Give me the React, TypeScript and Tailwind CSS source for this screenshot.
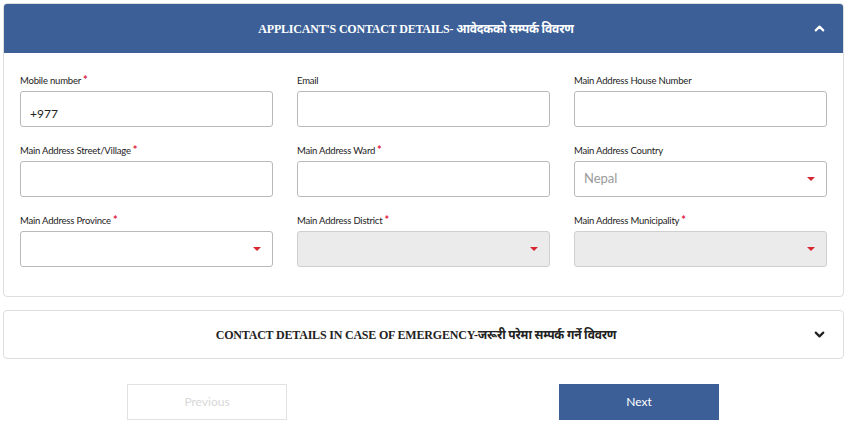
import { ChevronUp, ChevronDown } from 'lucide-react'

interface Field {
  label: string
  required?: boolean
  kind: 'input' | 'select'
  value?: string
  placeholder?: string
  disabled?: boolean
}

const fields: Field[] = [
  { label: 'Mobile number', required: true, kind: 'input', value: '+977' },
  { label: 'Email', kind: 'input' },
  { label: 'Main Address House Number', kind: 'input' },
  { label: 'Main Address Street/Village', required: true, kind: 'input' },
  { label: 'Main Address Ward', required: true, kind: 'input' },
  { label: 'Main Address Country', kind: 'select', placeholder: 'Nepal' },
  { label: 'Main Address Province', required: true, kind: 'select' },
  { label: 'Main Address District', required: true, kind: 'select', disabled: true },
  { label: 'Main Address Municipality', required: true, kind: 'select', disabled: true },
]

const headFont = "font-['Liberation_Serif','Noto_Sans',serif]"

function Caret() {
  return <span className="w-0 h-0 border-l-[4px] border-r-[4px] border-t-[4px] border-l-transparent border-r-transparent border-t-[#d7262f]" />
}

function FormField({ f }: { f: Field }) {
  return (
    <div className="flex flex-col">
      <label className="h-[14px] text-[9.5px] leading-[14px] tracking-[-0.2px] text-[#222] mb-[3px]">
        {f.label}
        {f.required && (
          <span className="text-[#e3173e] text-[11px] leading-none font-bold ml-[2px]">*</span>
        )}
      </label>
      <div
        className={
          'h-[36px] rounded-[3px] border border-[#b9b9b9] flex items-center pl-[9px] pr-[11px] ' +
          (f.disabled ? 'bg-[#ebebeb] border-[#cfcfcf]' : 'bg-white')
        }
      >
        <span
          className={
            'flex-1 ' + (f.value ? 'text-[#222] text-[12px] pt-[10px]' : 'text-[#9a9a9a] text-[13px]')
          }
        >
          {f.value ?? f.placeholder ?? ''}
        </span>
        {f.kind === 'select' && <Caret />}
      </div>
    </div>
  )
}

export default function App() {
  return (
    <div className="w-full min-h-[424px] bg-white px-[3px] pt-[3px] font-['Lato','Noto_Sans',sans-serif]">
      {/* Applicant's contact details */}
      <div className="border border-[#dedede] rounded-[4px] overflow-hidden">
        <div className="h-[49px] bg-[#3c5f97] flex items-center px-[16px]">
          <h2 className={`flex-1 text-center text-white text-[12px] tracking-[-0.2px] font-bold ${headFont}`}>
            APPLICANT'S CONTACT DETAILS- आवेदकको सम्पर्क विवरण
          </h2>
          <ChevronUp size={15} strokeWidth={3.5} className="text-white" />
        </div>
        <div className="grid grid-cols-3 gap-x-[24px] gap-y-[17px] pl-[16px] pr-[16px] pt-[21px] pb-[29px]">
          {fields.map((f) => (
            <FormField key={f.label} f={f} />
          ))}
        </div>
      </div>

      {/* Emergency contact */}
      <div className="mt-[13px] h-[49px] border border-[#dedede] rounded-[4px] flex items-center px-[16px]">
        <h2 className={`flex-1 text-center text-[#222] text-[12px] tracking-[-0.2px] font-bold ${headFont}`}>
          CONTACT DETAILS IN CASE OF EMERGENCY-जरूरी परेमा सम्पर्क गर्ने विवरण
        </h2>
        <ChevronDown size={15} strokeWidth={3.5} className="text-[#222]" />
      </div>

      {/* Navigation */}
      <div className="mt-[25px] flex gap-[272px] pl-[124px]">
        <button className="w-[160px] h-[36px] border border-[#e2e2e2] text-[#d8d8d8] text-[12px]">
          Previous
        </button>
        <button className="w-[160px] h-[36px] bg-[#3c5f97] text-white text-[12px]">Next</button>
      </div>
    </div>
  )
}
